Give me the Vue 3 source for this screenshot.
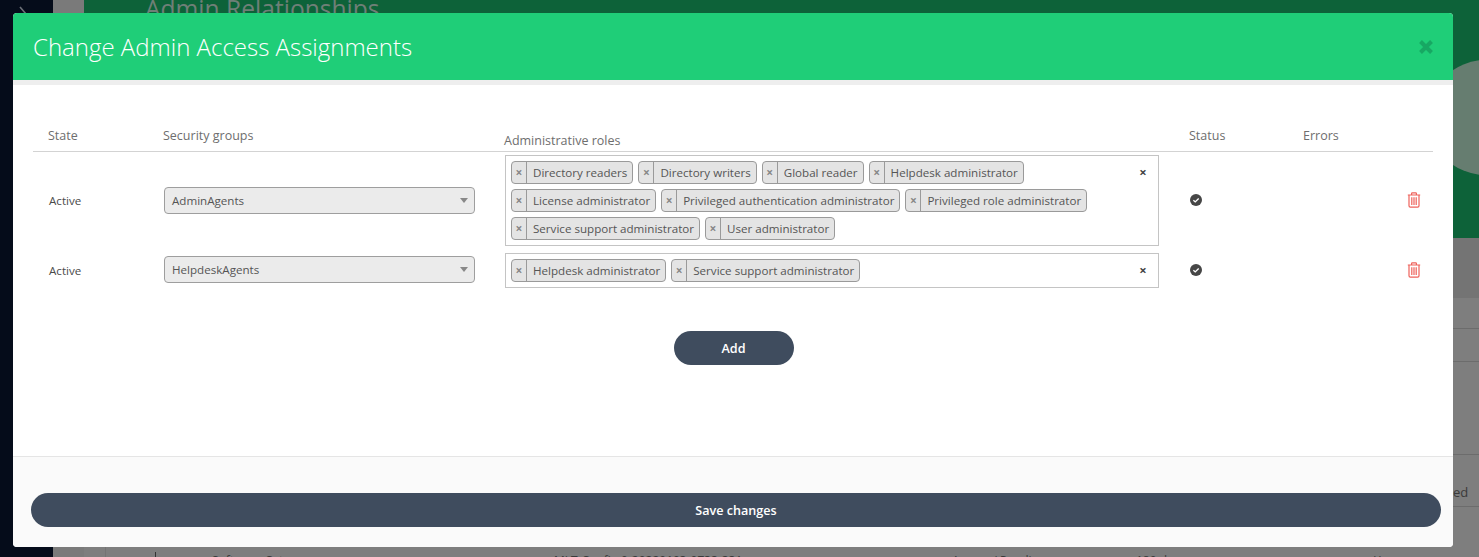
<script setup>
const headers = [
  { label: 'State', cls: 'h-state' },
  { label: 'Security groups', cls: 'h-groups' },
  { label: 'Administrative roles', cls: 'h-roles' },
  { label: 'Status', cls: 'h-status' },
  { label: 'Errors', cls: 'h-errors' }
]
const rows = [
  {
    state: 'Active',
    group: 'AdminAgents',
    roles: [
      'Directory readers', 'Directory writers', 'Global reader', 'Helpdesk administrator',
      'License administrator', 'Privileged authentication administrator', 'Privileged role administrator',
      'Service support administrator', 'User administrator'
    ]
  },
  {
    state: 'Active',
    group: 'HelpdeskAgents',
    roles: ['Helpdesk administrator', 'Service support administrator']
  }
]
</script>

<template>
  <div class="page">
    <aside class="rail">
      <svg class="chev" width="10" height="16" viewBox="0 0 10 16"><path d="M2 1l6 7-6 7" fill="none" stroke="#6d7178" stroke-width="1.6"/></svg>
    </aside>
    <div class="strip"></div>
    <main class="back">
      <div class="hero">
        <h1 class="back-title">Admin Relationships</h1>
        <div class="blob"></div>
      </div>
      <div class="lower">
        <div class="band"></div>
        <div class="back-vline"></div>
        <div class="back-line l1"></div>
        <div class="back-line l2"></div>
        <div class="back-line l3"></div>
        <span class="back-ed">ed</span>
        <div class="back-line l4"></div>
        <div class="back-row">
          <i class="r0"></i>
          <span class="r1">Software Cat</span>
          <span class="r2">MLT-Config-0-20220103-0733-331</span>
          <span class="r3">Access / Pending</span>
          <span class="r4">180 d</span>
          <span class="r5">Yes</span>
        </div>
      </div>
    </main>

    <section class="modal">
      <header class="m-head">
        <h2>Change Admin Access Assignments</h2>
        <svg class="close" width="16" height="16" viewBox="0 0 16 16"><path d="M2.5 2.5l11 11M13.5 2.5l-11 11" stroke="#17a863" stroke-width="4"/></svg>
      </header>
      <div class="m-body">
        <div class="table">
          <div class="thead">
            <span v-for="h in headers" :key="h.label" :class="h.cls">{{ h.label }}</span>
          </div>
          <div v-for="(row, i) in rows" :key="row.group" class="trow" :class="{ second: i === 1 }">
            <span class="c-state">{{ row.state }}</span>
            <div class="select">
              <span>{{ row.group }}</span>
              <i class="caret"></i>
            </div>
            <div class="multi">
              <div class="tags">
                <span v-for="r in row.roles" :key="r" class="tag"><b>×</b><em>{{ r }}</em></span>
              </div>
              <span class="clear">×</span>
            </div>
            <div class="c-status">
              <svg width="12" height="12" viewBox="0 0 12 12"><circle cx="6" cy="6" r="6" fill="#464646"/><path d="M3.4 6.3l1.8 1.6 3.5-3.4" fill="none" stroke="#fff" stroke-width="1.4"/></svg>
            </div>
            <div class="c-del">
              <svg width="14" height="16" viewBox="0 0 14 16" fill="none" stroke="#ee625b" stroke-width="1.2"><path d="M.8 3h12.4M4.6 3V1.6c0-.5.3-.8.8-.8h3.2c.5 0 .8.3.8.8V3M2 3v10.8c0 .8.5 1.4 1.3 1.4h7.4c.8 0 1.3-.6 1.3-1.4V3M4.8 5.2v7.8M7 5.2v7.8M9.2 5.2v7.8"/></svg>
            </div>
          </div>
        </div>
        <div class="add-wrap"><button class="add">Add</button></div>
      </div>
      <footer class="m-foot">
        <button class="save">Save changes</button>
      </footer>
    </section>
  </div>
</template>

<style>
html, body { margin: 0; padding: 0; overflow: hidden; }
</style>

<style scoped>
.page { position: relative; width: 1479px; height: 557px; display: flex; overflow: hidden; background: #7e7e7e; font-family: "Open Sans", sans-serif; color: #4a4a4a; }
.rail { width: 53px; flex: none; background: #050c1a; padding: 6px 0 0 18px; box-sizing: border-box; }
.chev { display: block; }
.strip { width: 31px; flex: none; background: #7a7a7a; }
.back { flex: 1; min-width: 0; display: flex; flex-direction: column; }
.hero { height: 238px; flex: none; background: #0d6239; padding-left: 61px; position: relative; overflow: hidden; }
.back-title { margin: -8px 0 0; font-size: 24.6px; font-weight: 400; line-height: 33px; color: #6f7f77; }
.blob { position: absolute; left: 1344px; top: 60px; width: 115px; height: 115px; border-radius: 50%; background: #667d70; }
.lower { flex: 1; background: #7e7e7e; position: relative; }
.band { position: absolute; left: 0; right: 0; top: 0; height: 60px; background: #747474; }
.back-vline { position: absolute; left: 21px; top: 0; bottom: 0; width: 1px; background: #747474; }
.back-line { position: absolute; left: 21px; right: 0; height: 1px; background: #6c6c6c; }
.l1 { top: 90px; } .l2 { top: 123px; } .l3 { top: 216px; } .l4 { top: 268px; }
.back-ed { position: absolute; left: 1369px; top: 245px; font-size: 13px; color: #3a3a3a; line-height: 18px; }
.back-row { position: absolute; left: 0; top: 315px; width: 100%; font-size: 12px; line-height: 16px; color: #3a3a3a; }
.back-row span { position: absolute; white-space: nowrap; }
.r0 { position: absolute; left: 71px; top: -1px; width: 1px; height: 12px; background: #333; }
.r1 { left: 128px; } .r2 { left: 470px; } .r3 { left: 868px; } .r4 { left: 1052px; } .r5 { left: 1290px; }

.modal { position: absolute; left: 13px; top: 13px; width: 1440px; height: 534px; display: flex; flex-direction: column; background: #fff; border-radius: 4px; overflow: hidden; }
.m-head { height: 67px; flex: none; box-sizing: border-box; background: #1fce78; display: flex; align-items: center; justify-content: space-between; padding: 0 19px 0 20px; }
.m-head h2 { margin: 0; font-size: 24px; font-weight: 300; color: #fff; line-height: 33px; }
.close { display: block; }
.m-body { flex: 1; min-height: 0; border-top: 5px solid #eeeeee; padding: 36px 20px 0; box-sizing: border-box; }
.thead { position: relative; height: 30px; border-bottom: 1px solid #d3d3d3; font-size: 12.5px; color: #6e6e6e; }
.thead span { position: absolute; white-space: nowrap; line-height: 17px; top: 6px; }
.h-state { left: 15px; } .h-groups { left: 130px; } .h-roles { left: 471px; top: 11px !important; } .h-status { left: 1156px; } .h-errors { left: 1270px; }
.trow { display: flex; align-items: center; padding-top: 3px; }
.trow.second { padding-top: 7px; }
.c-state { width: 131px; flex: none; padding: 0 0 1px 16px; box-sizing: border-box; font-size: 11.6px; color: #4a4a4a; }
.select { width: 311px; height: 27px; flex: none; box-sizing: border-box; background: #ebebeb; border: 1px solid #9e9e9e; border-radius: 4px; display: flex; align-items: center; justify-content: space-between; padding: 0 6px 0 7px; font-size: 11.6px; color: #555; margin: 0 30px 0 0; }
.second .select { margin-bottom: 2px; }
.caret { width: 0; height: 0; border-left: 4px solid transparent; border-right: 4px solid transparent; border-top: 5px solid #888; }
.multi { width: 654px; flex: none; box-sizing: border-box; border: 1px solid #c4c4c4; padding: 5px 10px 5px 5px; display: flex; }
.tags { flex: 1; display: flex; flex-wrap: wrap; gap: 5px; }
.tag { height: 23px; box-sizing: border-box; display: flex; align-items: center; background: #e4e4e4; border: 1px solid #9a9a9a; border-radius: 4px; font-size: 11.6px; color: #555; white-space: nowrap; }
.tag b { width: 15px; height: 100%; box-sizing: border-box; border-right: 1px solid #9a9a9a; display: flex; align-items: center; justify-content: center; font-weight: 700; font-size: 12px; color: #888; }
.tag em { font-style: normal; padding: 0 5px 0 6px; }
.clear { width: 10px; height: 23px; line-height: 23px; text-align: center; font-size: 13px; font-weight: 700; color: #444; }
.c-status { width: 122px; flex: none; padding: 0 0 1px 31px; box-sizing: border-box; display: flex; }
.c-del { flex: 1; display: flex; justify-content: flex-end; padding: 0 12px 2px 0; box-sizing: border-box; }
.add-wrap { display: flex; justify-content: center; padding: 43px 0 0 1px; }
.add { width: 120px; height: 34px; border: 0; border-radius: 17px; background: #3f4c5e; color: #fff; font: 600 12.6px "Open Sans", sans-serif; }
.m-foot { height: 91px; flex: none; box-sizing: border-box; background: #fafafa; border-top: 1px solid #e5e5e5; padding: 36px 12px 0 18px; }
.save { display: block; width: 100%; height: 34px; border: 0; border-radius: 17px; background: #3f4c5e; color: #fff; font: 600 12.6px "Open Sans", sans-serif; }
</style>
